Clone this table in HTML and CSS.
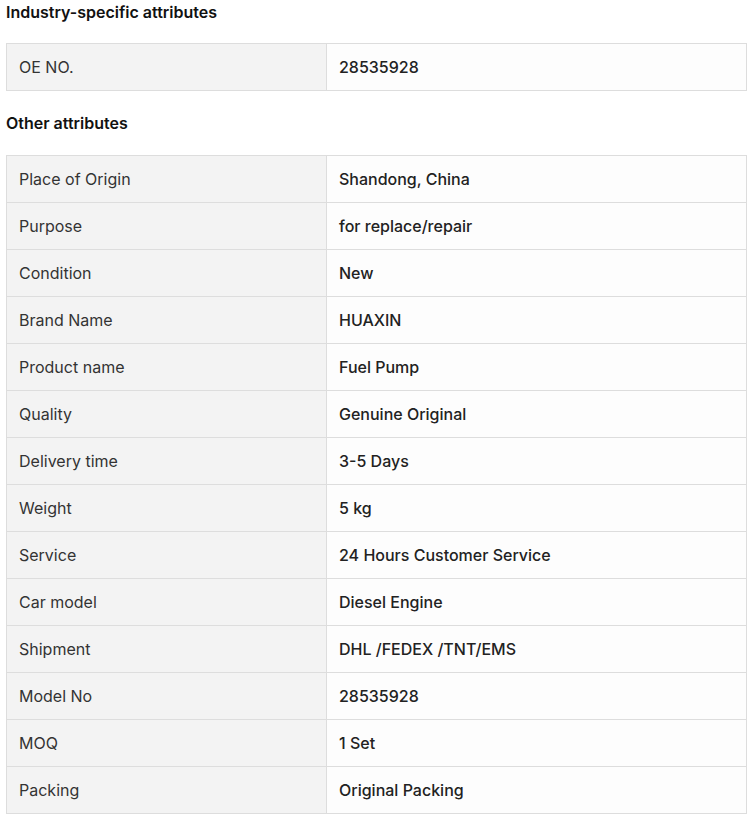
FILE: index.html
```html
<!DOCTYPE html>
<html>
<head>
<meta charset="utf-8">
<link rel="stylesheet" href="styles.css">
</head>
<body>
<div class="page">
  <h3 class="title first">Industry-specific attributes</h3>
  <table class="attrs">
    <colgroup><col class="c1"><col class="c2"></colgroup>
    <tr><td class="k">OE NO.</td><td class="v">28535928</td></tr>
  </table>
  <h3 class="title">Other attributes</h3>
  <table class="attrs">
    <colgroup><col class="c1"><col class="c2"></colgroup>
    <tr><td class="k">Place of Origin</td><td class="v">Shandong, China</td></tr>
    <tr><td class="k">Purpose</td><td class="v">for replace/repair</td></tr>
    <tr><td class="k">Condition</td><td class="v">New</td></tr>
    <tr><td class="k">Brand Name</td><td class="v">HUAXIN</td></tr>
    <tr><td class="k">Product name</td><td class="v">Fuel Pump</td></tr>
    <tr><td class="k">Quality</td><td class="v">Genuine Original</td></tr>
    <tr><td class="k">Delivery time</td><td class="v">3-5 Days</td></tr>
    <tr><td class="k">Weight</td><td class="v">5 kg</td></tr>
    <tr><td class="k">Service</td><td class="v">24 Hours Customer Service</td></tr>
    <tr><td class="k">Car model</td><td class="v">Diesel Engine</td></tr>
    <tr><td class="k">Shipment</td><td class="v">DHL /FEDEX /TNT/EMS</td></tr>
    <tr><td class="k">Model No</td><td class="v">28535928</td></tr>
    <tr><td class="k">MOQ</td><td class="v">1 Set</td></tr>
    <tr><td class="k">Packing</td><td class="v">Original Packing</td></tr>
  </table>
</div>
</body>
</html>
```
FILE: styles.css
```css
html, body {
  margin: 0;
  padding: 0;
  background: #fff;
}
.page {
  padding: 0 0 0 6px;
  font-family: Inter, "Noto Sans", sans-serif;
  color: #222;
}
.title {
  margin: 20px 0 20px;
  font-size: 16px;
  line-height: 24px;
  font-weight: 600;
  color: #111;
}
.title.first {
  margin-top: 0;
  margin-bottom: 19px;
}
.attrs {
  border-collapse: collapse;
  table-layout: fixed;
  width: 741px;
  border: 1px solid #ddd;
}
.c1 { width: 320px; }
.attrs td {
  border: 1px solid #ddd;
  height: 47px;
  padding: 0 12px;
  font-size: 16px;
  line-height: 20px;
  box-sizing: border-box;
}
.attrs td.k {
  background: #f3f3f3;
  color: #333;
  font-weight: 400;
}
.attrs td.v {
  background: #fdfdfd;
  color: #222;
  font-weight: 500;
}
```
